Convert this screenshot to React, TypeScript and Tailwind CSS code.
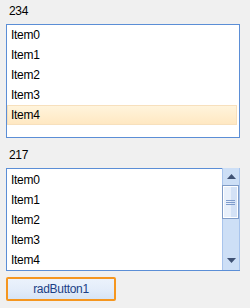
const items = ['Item0', 'Item1', 'Item2', 'Item3', 'Item4'];

function ScrollBar() {
  return (
    <div className="flex w-[18px] flex-col">
      <div className="relative flex h-[102px] flex-col border-x border-[#a8c4ec] bg-[#cddff6]">
        <div className="flex h-[17px] items-center justify-center">
          <svg width="9" height="5" viewBox="0 0 9 5" className="mt-[-1px]">
            <path d="M4.5 0 L9 5 L0 5 Z" fill="#3f5274" />
          </svg>
        </div>
        <div className="-ml-px flex h-[34px] w-[17px] border border-[#7f9cc8] bg-white p-px">
          <div className="relative flex flex-1">
            <div className="flex-1 bg-[#e8f0fb]" />
            <div className="flex-1 bg-[#d4e2f6]" />
            <div className="absolute inset-x-[2px] top-[13px] flex flex-col gap-[1px]">
              <div className="h-px bg-[#7f9ccc]" />
              <div className="h-px bg-[#7f9ccc]" />
              <div className="h-px bg-[#7f9ccc]" />
            </div>
          </div>
        </div>
        <div className="flex-1" />
        <div className="flex h-[17px] items-center justify-center">
          <svg width="9" height="5" viewBox="0 0 9 5" className="mt-[-3px]">
            <path d="M0 0 L9 0 L4.5 5 Z" fill="#3f5274" />
          </svg>
        </div>
      </div>
      <div className="h-px bg-[#5b8ed6]" />
    </div>
  );
}

export default function App() {
  return (
    <div
      className="h-[308px] w-[250px] bg-[#f0f0f0] px-[6px] pt-[3px] text-[12px] tracking-[-0.3px] text-black"
      style={{ fontFamily: '"Liberation Sans", Arial, sans-serif' }}
    >
      <div className="mb-[5px] h-[16px] pl-[3px] leading-[16px]">234</div>

      <div className="h-[114px] w-[234px] border border-[#5b8ed6] bg-white">
        {items.map((it, i) => (
          <div
            key={it}
            className={
              i === 4
                ? 'mr-[2px] h-[20px] border border-[#f7e0bd] bg-gradient-to-b from-[#fff4dc] to-[#ffe8c2] pl-[3px] leading-[18px]'
                : 'h-[20px] pl-[4px] leading-[20px]'
            }
          >
            {it}
          </div>
        ))}
      </div>

      <div className="mb-[5px] mt-[9px] h-[16px] pl-[3px] leading-[16px]">217</div>

      <div className="flex h-[103px] w-[234px]">
        <div className="flex-1 border-y border-l border-[#5b8ed6] bg-white pt-px">
          {items.map((it) => (
            <div key={it} className="h-[20px] pl-[4px] leading-[20px]">
              {it}
            </div>
          ))}
        </div>
        <ScrollBar />
      </div>

      <button className="mt-[6px] flex h-[24px] w-[110px] items-center justify-center rounded-[2px] border-2 border-[#f5961f] bg-gradient-to-b from-[#ebf2fc] via-[#e4edfa] to-[#d6e4f6] text-[12px] tracking-[-0.3px] text-[#1b3f86]">
        radButton1
      </button>
    </div>
  );
}
